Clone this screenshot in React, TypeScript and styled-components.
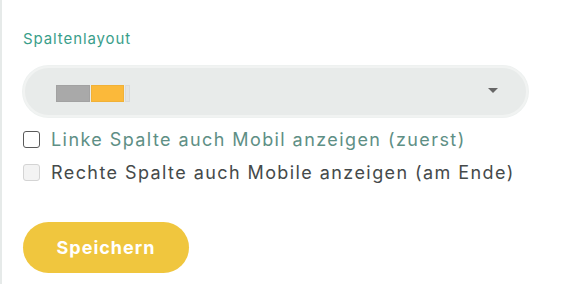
import React, { useState } from "react";
import styled, { createGlobalStyle } from "styled-components";

const GlobalStyle = createGlobalStyle`
  html, body {
    margin: 0;
    padding: 0;
    background: #ffffff;
  }
  body {
    font-family: Inter, "Noto Sans", sans-serif;
  }
`;

const Panel = styled.div`
  box-sizing: border-box;
  width: 567px;
  height: 284px;
  border-left: 2px solid #e6eae9;
  padding: 29px 0 0 21px;
`;

const Label = styled.div`
  font-size: 15px;
  line-height: 20px;
  color: #3a9e8a;
  letter-spacing: 0.9px;
`;

const Select = styled.div`
  box-sizing: border-box;
  margin-top: 17px;
  width: 505px;
  height: 51px;
  border-radius: 26px;
  background: #e8ebea;
  border: 2px solid #f1f3f2;
  box-shadow: 0 0 0 1px #eef1f0;
  display: flex;
  align-items: center;
  justify-content: space-between;
  padding: 0 28px 0 31px;
`;

const Preview = styled.div`
  display: flex;
  gap: 1px;
  height: 17px;
  margin-top: 3px;
`;

const Segment = styled.div<{ $w: number; $color: string }>`
  width: ${(p) => p.$w}px;
  height: 100%;
  background: ${(p) => p.$color};
  box-shadow: inset 0 0 0 1px rgba(0, 0, 0, 0.04);
`;

const Caret = styled.div`
  width: 0;
  height: 0;
  border-left: 5px solid transparent;
  border-right: 5px solid transparent;
  border-top: 5px solid #666666;
  margin-bottom: 2px;
`;

const Options = styled.div`
  margin-top: 6px;
  display: flex;
  flex-direction: column;
`;

const Row = styled.label<{ $muted?: boolean }>`
  display: flex;
  align-items: center;
  gap: 11px;
  height: 33px;
  font-size: 18px;
  letter-spacing: 1.42px;
  color: ${(p) => (p.$muted ? "#454a4a" : "#5e8f85")};
  cursor: ${(p) => (p.$muted ? "default" : "pointer")};
`;

const Box = styled.input`
  appearance: none;
  margin: 0;
  box-sizing: border-box;
  width: 17px;
  height: 17px;
  border-radius: 3px;
  border: 1.5px solid #5a5a5a;
  background: #ffffff;
  flex: none;
  &:disabled {
    border: 1px solid #d4d4d4;
    background: #f3f3f3;
  }
  &:checked {
    background: #3a9e8a;
    border-color: #3a9e8a;
  }
`;

const SaveButton = styled.button`
  margin-top: 33px;
  width: 166px;
  height: 51px;
  border: none;
  border-radius: 26px;
  background: #f0c63e;
  color: #ffffff;
  font-family: Inter, "Noto Sans", sans-serif;
  font-weight: 700;
  font-size: 18px;
  letter-spacing: 1px;
  cursor: pointer;
`;

export default function App() {
  const [left, setLeft] = useState(false);

  return (
    <>
      <GlobalStyle />
      <Panel>
        <Label>Spaltenlayout</Label>
        <Select>
          <Preview>
            <Segment $w={34} $color="#a9a9a9" />
            <Segment $w={33} $color="#fbb93a" />
            <Segment $w={5} $color="#e2e4e4" />
          </Preview>
          <Caret />
        </Select>
        <Options>
          <Row>
            <Box type="checkbox" checked={left} onChange={(e) => setLeft(e.target.checked)} />
            Linke Spalte auch Mobil anzeigen (zuerst)
          </Row>
          <Row $muted>
            <Box type="checkbox" disabled />
            Rechte Spalte auch Mobile anzeigen (am Ende)
          </Row>
        </Options>
        <SaveButton>Speichern</SaveButton>
      </Panel>
    </>
  );
}
